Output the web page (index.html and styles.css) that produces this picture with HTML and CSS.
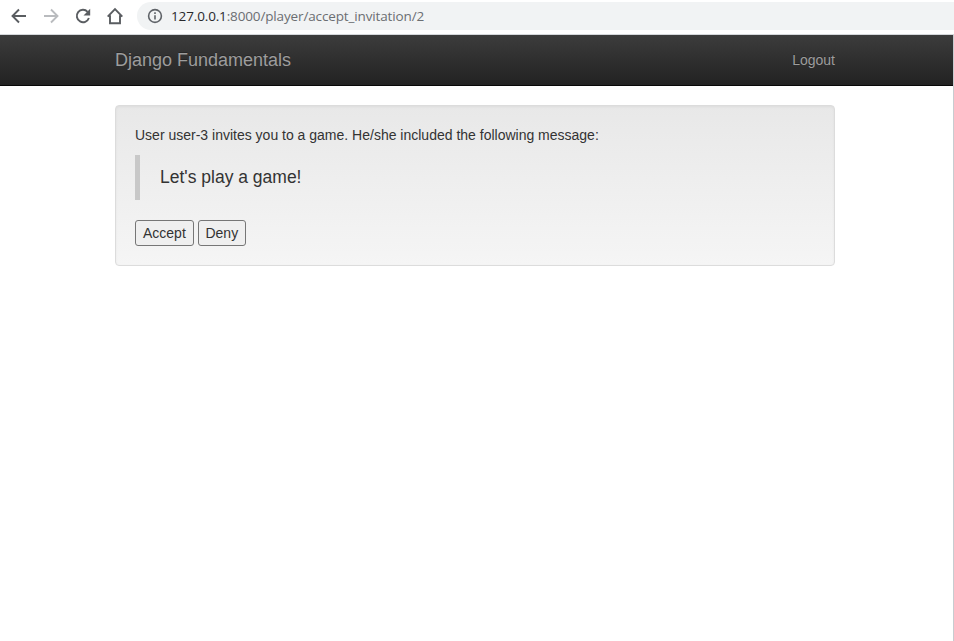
FILE: index.html
```html
<!DOCTYPE html>
<html lang="en">
<head>
<meta charset="utf-8">
<title>Django Fundamentals</title>
<link rel="stylesheet" href="styles.css">
</head>
<body>
<div class="toolbar">
  <svg class="icon" viewBox="0 0 22 22"><path d="M18 11H5M11 4.500L4.500 11l6.500 6.500"/></svg>
  <svg class="icon disabled" viewBox="0 0 22 22"><path d="M4 11h13M11 4.500l6.500 6.500L11 17.500"/></svg>
  <svg class="icon" viewBox="0 0 22 22"><path d="M16.900 13A6.200 6.200 0 1 1 15.600 6.800"/><path class="solid" d="M18.200 3.800v6.700h-6.700z"/></svg>
  <svg class="icon" viewBox="0 0 22 22"><path d="M3.700 11.700L11 4.200l7.300 7.500M6 10.300v7.900h10v-7.900"/></svg>
  <div class="address">
    <svg class="info" viewBox="0 0 16 16"><circle cx="8" cy="8" r="6.400"/><path d="M8 7.200v4.300M8 4.300v1.700"/></svg>
    <span class="url"><span class="host">127.0.0.1</span>:8000/player/accept_invitation/2</span>
  </div>
</div>
<div class="page">
  <nav class="navbar">
    <div class="container bar">
      <a class="brand">Django Fundamentals</a>
      <a class="logout">Logout</a>
    </div>
  </nav>
  <main class="container">
    <div class="well">
      <p>User user-3 invites you to a game. He/she included the following message:</p>
      <blockquote>Let's play a game!</blockquote>
      <form class="actions">
        <button type="button">Accept</button>
        <button type="button" class="deny">Deny</button>
      </form>
    </div>
  </main>
</div>
</body>
</html>
```
FILE: styles.css
```css
* { box-sizing: border-box; }
body {
  margin: 0;
  height: 641px;
  display: flex;
  flex-direction: column;
  overflow: hidden;
  background: #fff;
  color: #333;
  font: 14px/20px "Liberation Sans", Arial, sans-serif;
}
.toolbar {
  display: flex;
  align-items: center;
  gap: 10px;
  height: 35px;
  padding: 0 0 3px 8px;
  border-bottom: 1px solid #d5d8db;
}
.icon {
  flex: none;
  width: 22px;
  height: 22px;
  fill: none;
  stroke: #5a5d61;
  stroke-width: 1.9;
}
.icon.disabled { stroke: #b9bbbe; }
.icon .solid { fill: #5a5d61; stroke: none; }
.address {
  flex: 1;
  display: flex;
  align-items: center;
  gap: 8px;
  height: 28px;
  margin-left: 1px;
  padding-left: 10px;
  border-radius: 14px 0 0 14px;
  background: #f1f3f4;
}
.info {
  width: 16px;
  height: 16px;
  fill: none;
  stroke: #5f6368;
  stroke-width: 1.6;
}
.url {
  color: #6b6e72;
  font-family: "Open Sans", "Noto Sans", sans-serif;
  font-size: 13.5px;
  letter-spacing: -.14px;
  white-space: nowrap;
}
.host { color: #28292c; }
.page {
  flex: 1;
  border-right: 1px solid #c8ccd0;
}
.container {
  width: 720px;
  margin-left: 115px;
}
.navbar {
  height: 51px;
  border-bottom: 1px solid #080808;
  background: linear-gradient(#3c3c3c, #222);
}
.bar {
  display: flex;
  align-items: center;
  justify-content: space-between;
  height: 50px;
}
.navbar a {
  color: #9d9d9d;
  text-shadow: 0 -1px 0 rgba(0, 0, 0, .25);
}
.brand { font-size: 18px; }
.well {
  margin-top: 19px;
  min-height: 161px;
  padding: 19px;
  border: 1px solid #dcdcdc;
  border-radius: 4px;
  background: linear-gradient(#e8e8e8, #f5f5f5);
  box-shadow: inset 0 1px 3px rgba(0, 0, 0, .05), 0 1px 0 rgba(255, 255, 255, .1);
}
.well p { margin: 0 0 10px; }
blockquote {
  height: 45px;
  margin: 0 0 20px;
  padding: 10px 20px;
  border-left: 5px solid #c8c8c8;
  font-size: 17.500px;
  line-height: 25px;
}
.actions {
  display: flex;
  gap: 4px;
  margin: 0;
}
button {
  height: 26px;
  margin: 0;
  padding: 2px 7px;
  border: 1px solid #767676;
  border-radius: 3px;
  background: #efefef;
  color: #333;
  font: inherit;
}
.deny {
  width: 48px;
  padding: 2px 0;
}
```
